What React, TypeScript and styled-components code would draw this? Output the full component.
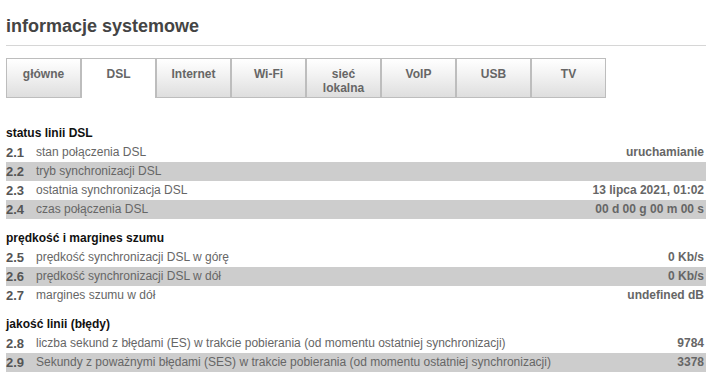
import styled, { createGlobalStyle } from "styled-components"

const Global = createGlobalStyle`
  body {
    margin: 0;
    background: #fff;
    font-family: "Liberation Sans", Arial, sans-serif;
  }
`

const Page = styled.div`
  width: 700px;
  padding: 0 6px;
`

const Title = styled.h1`
  margin: 0;
  padding-top: 14px;
  height: 31px;
  line-height: 24px;
  font-size: 18px;
  font-weight: bold;
  color: #444;
  border-bottom: 1px solid #d6d6d6;
`

const Tabs = styled.div`
  display: flex;
  margin-top: 12px;
`

const Tab = styled.div<{ $active?: boolean }>`
  box-sizing: border-box;
  width: 75px;
  height: 40px;
  padding-top: 8px;
  text-align: center;
  font-size: 12px;
  font-weight: bold;
  line-height: 14px;
  color: #666;
  border: 1px solid #bdbdbd;
  border-bottom: ${(p) => (p.$active ? "none" : "1px solid #bdbdbd")};
  background: ${(p) =>
    p.$active ? "#fff" : "linear-gradient(#fff 0%, #f3f3f3 40%, #dedede 100%)"};
`

const Section = styled.div<{ $first?: boolean }>`
  margin-top: ${(p) => (p.$first ? "26px" : "10px")};
`

const Heading = styled.div`
  height: 19px;
  line-height: 19px;
  font-size: 12px;
  font-weight: bold;
  color: #111;
`

const Row = styled.div<{ $shade?: boolean }>`
  display: flex;
  height: 19px;
  line-height: 19px;
  font-size: 12px;
  color: #666;
  background: ${(p) => (p.$shade ? "#cdcdcd" : "transparent")};
`

const Num = styled.span`
  width: 30px;
  font-weight: bold;
  font-size: 13px;
  color: #555;
`

const Label = styled.span`
  flex: 1;
`

const Value = styled.span`
  font-weight: bold;
  padding-right: 2px;
`

const tabs = ["główne", "DSL", "Internet", "Wi-Fi", "sieć\nlokalna", "VoIP", "USB", "TV"]

const sections: { title: string; rows: [string, string, string][] }[] = [
  {
    title: "status linii DSL",
    rows: [
      ["2.1", "stan połączenia DSL", "uruchamianie"],
      ["2.2", "tryb synchronizacji DSL", ""],
      ["2.3", "ostatnia synchronizacja DSL", "13 lipca 2021, 01:02"],
      ["2.4", "czas połączenia DSL", "00 d 00 g 00 m 00 s"],
    ],
  },
  {
    title: "prędkość i margines szumu",
    rows: [
      ["2.5", "prędkość synchronizacji DSL w górę", "0 Kb/s"],
      ["2.6", "prędkość synchronizacji DSL w dół", "0 Kb/s"],
      ["2.7", "margines szumu w dół", "undefined dB"],
    ],
  },
  {
    title: "jakość linii (błędy)",
    rows: [
      ["2.8", "liczba sekund z błędami (ES) w trakcie pobierania (od momentu ostatniej synchronizacji)", "9784"],
      ["2.9", "Sekundy z poważnymi błędami (SES) w trakcie pobierania (od momentu ostatniej synchronizacji)", "3378"],
    ],
  },
]

export default function App() {
  return (
    <Page>
      <Global />
      <Title>informacje systemowe</Title>
      <Tabs>
        {tabs.map((t) => (
          <Tab key={t} $active={t === "DSL"}>
            {t.split("\n").map((line) => (
              <div key={line}>{line}</div>
            ))}
          </Tab>
        ))}
      </Tabs>
      {sections.map((s, si) => (
        <Section key={s.title} $first={si === 0}>
          <Heading>{s.title}</Heading>
          {s.rows.map((r, i) => (
            <Row key={r[0]} $shade={i % 2 === 1}>
              <Num>{r[0]}</Num>
              <Label>{r[1]}</Label>
              <Value>{r[2]}</Value>
            </Row>
          ))}
        </Section>
      ))}
    </Page>
  )
}
